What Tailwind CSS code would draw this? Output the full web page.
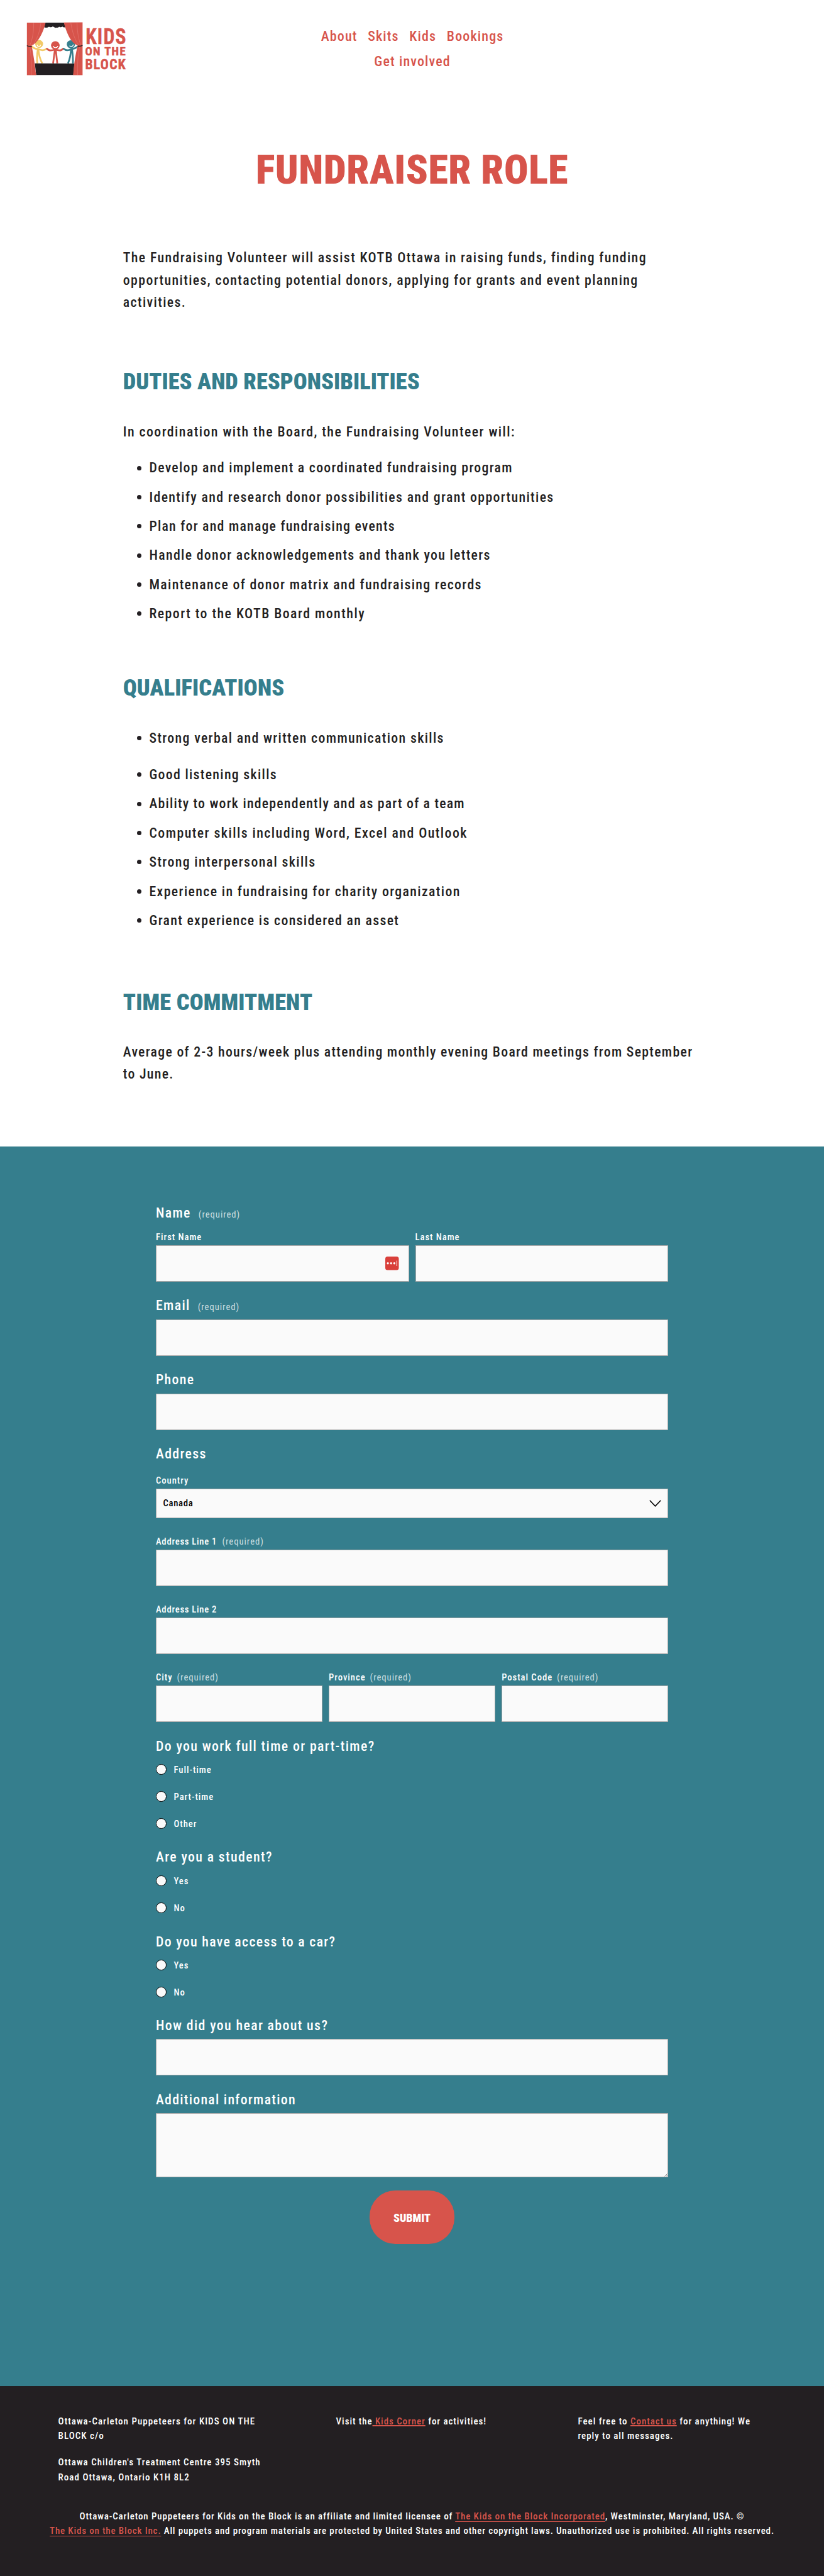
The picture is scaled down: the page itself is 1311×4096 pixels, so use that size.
<!DOCTYPE html>
<html lang="en">
<head>
<meta charset="utf-8">
<title>Fundraiser Role</title>
<script src="https://cdn.jsdelivr.net/npm/@tailwindcss/browser@4"></script>
</head>
<body class="bg-white font-['Roboto',sans-serif] font-medium [font-stretch:75%] text-[#231f22] overflow-x-hidden">

<header class="flex h-[231.3px] items-start">
  <a class="ml-[30.7px] mt-[25.6px] block w-[184.4px] shrink-0">
    <svg viewBox="0 0 1080 600" class="block w-[184.4px] h-[102.4px]" aria-label="Kids on the Block">
      <!-- puppets -->
      <g fill="none" stroke="#f2ca68" stroke-width="16" stroke-linecap="round" stroke-linejoin="round">
        <path d="M117 281C130 298 148 304 172 304C205 320 232 318 250 303"/>
        <path d="M170 310C164 350 160 395 166 438M176 310C180 355 188 395 212 438" stroke-linecap="butt"/>
      </g>
      <circle cx="183" cy="257" r="37" fill="#f2ca68"/>
      <path d="M164 267C170 286 190 288 196 268" fill="none" stroke="#fff" stroke-width="8" stroke-linecap="round"/>
      <g fill="none" stroke="#d7544b" stroke-width="16" stroke-linecap="round" stroke-linejoin="round">
        <path d="M256 301C272 322 298 322 333 308C366 322 392 320 406 301"/>
        <path d="M330 310L313 438M338 310L352 438" stroke-linecap="butt"/>
      </g>
      <circle cx="334" cy="271" r="40" fill="#d7544b"/>
      <path d="M315 279C322 297 348 297 356 279" fill="none" stroke="#fff" stroke-width="8" stroke-linecap="round"/>
      <g fill="none" stroke="#357e8d" stroke-width="16" stroke-linecap="round" stroke-linejoin="round">
        <path d="M412 302C432 320 458 320 484 304C510 302 528 298 542 281"/>
        <path d="M480 310C478 355 468 400 452 438M490 310C496 355 500 395 498 438" stroke-linecap="butt"/>
      </g>
      <circle cx="479" cy="260" r="38" fill="#357e8d"/>
      <path d="M469 276C480 289 498 282 501 265" fill="none" stroke="#fff" stroke-width="8" stroke-linecap="round"/>
      <!-- stage -->
      <path d="M240 59H416L428 100Q412 108 400 95Q385 108 370 96Q355 108 345 104Q335 112 310 94Q296 108 275 96Q252 110 231 102Z" fill="#231f22"/>
      <path d="M143 438L512 440L502 546H155Z" fill="#231f22"/>
      <!-- curtains -->
      <path d="M69 58H243C222 150 170 250 113 272C125 330 140 420 155 548H69Z" fill="#d7544b"/>
      <path d="M413 57L588 56V548H500C508 440 525 330 544 272C480 250 440 160 413 57Z" fill="#d7544b"/>
      <g fill="none" stroke="#ec8d88" stroke-width="2.5">
        <path d="M132 60C132 150 120 220 96 270M199 60C188 150 160 235 113 270M96 285C110 350 112 450 110 546"/>
        <path d="M478 58C492 150 520 230 555 270M536 58C538 150 552 220 572 268M560 285C540 380 540 460 542 546"/>
      </g>
      <path d="M69 269C85 276 100 278 114 276V285C98 287 82 282 69 277ZM588 267C572 274 556 275 542 273V283C560 284 574 280 588 275Z" fill="#231f22"/>
      <g fill="#d7544b" stroke="#d7544b" stroke-width="4" stroke-linejoin="round" font-family="Roboto, sans-serif" font-stretch="75%" letter-spacing="8">
        <text x="616" y="255" font-size="207" font-weight="600" textLength="384" lengthAdjust="spacingAndGlyphs">KIDS</text>
        <text x="612" y="363" font-size="108" font-weight="600" textLength="384" lengthAdjust="spacingAndGlyphs">ON THE</text>
        <text x="612" y="490" font-size="130" font-weight="600" textLength="384" lengthAdjust="spacingAndGlyphs">BLOCK</text>
      </g>
    </svg>
  </a>
  <nav class="ml-[225px] mt-[37.5px] flex w-[432px] flex-wrap justify-center gap-x-[16.6px] text-[22px] leading-[40px] tracking-[0.052em] text-[#d7544b]">
    <a>About</a><a>Skits</a><a>Kids</a><a>Bookings</a>
    <span class="w-full text-center"><a>Get involved</a></span>
  </nav>
</header>

<main>
  <h1 class="text-center text-[64px] leading-[80px] font-black tracking-[0.008em] text-[#d7544b]">FUNDRAISER ROLE</h1>

  <article class="ml-[195.8px] w-[920px] pb-[97.6px] text-[21.8px] leading-[35.5px] tracking-[0.062em]">
    <p class="mt-[81px] tracking-[0.0635em]">The Fundraising Volunteer will assist KOTB Ottawa in raising funds, finding funding<br>opportunities, contacting potential donors, applying for grants and event planning<br>activities.</p>

    <h2 class="mt-[84px] text-[36.4px] leading-[48px] font-black tracking-[0.001em] text-[#357e8d]">DUTIES AND RESPONSIBILITIES</h2>
    <p class="mt-[37.9px] tracking-[0.0665em]">In coordination with the Board, the Fundraising Volunteer will:</p>
    <ul class="mt-[22.1px] flex flex-col gap-[10.85px]">
      <li class="flex items-center tracking-[0.0594em]"><i class="ml-[22.7px] mr-[12px] size-[7px] rounded-full bg-[#231f22]"></i>Develop and implement a coordinated fundraising program</li>
      <li class="flex items-center"><i class="ml-[22.7px] mr-[12px] size-[7px] rounded-full bg-[#231f22]"></i>Identify and research donor possibilities and grant opportunities</li>
      <li class="flex items-center tracking-[0.057em]"><i class="ml-[22.7px] mr-[12px] size-[7px] rounded-full bg-[#231f22]"></i>Plan for and manage fundraising events</li>
      <li class="flex items-center tracking-[0.061em]"><i class="ml-[22.7px] mr-[12px] size-[7px] rounded-full bg-[#231f22]"></i>Handle donor acknowledgements and thank you letters</li>
      <li class="flex items-center"><i class="ml-[22.7px] mr-[12px] size-[7px] rounded-full bg-[#231f22]"></i>Maintenance of donor matrix and fundraising records</li>
      <li class="flex items-center tracking-[0.068em]"><i class="ml-[22.7px] mr-[12px] size-[7px] rounded-full bg-[#231f22]"></i>Report to the KOTB Board monthly</li>
    </ul>

    <h2 class="mt-[76.8px] text-[36.4px] leading-[48px] font-black tracking-[0.003em] text-[#357e8d]">QUALIFICATIONS</h2>
    <ul class="mt-[37.9px] flex flex-col gap-[10.95px]">
      <li class="mb-[11.2px] flex items-center"><i class="ml-[22.7px] mr-[12px] size-[7px] rounded-full bg-[#231f22]"></i>Strong verbal and written communication skills</li>
      <li class="flex items-center tracking-[0.06em]"><i class="ml-[22.7px] mr-[12px] size-[7px] rounded-full bg-[#231f22]"></i>Good listening skills</li>
      <li class="flex items-center tracking-[0.0555em]"><i class="ml-[22.7px] mr-[12px] size-[7px] rounded-full bg-[#231f22]"></i>Ability to work independently and as part of a team</li>
      <li class="flex items-center tracking-[0.067em]"><i class="ml-[22.7px] mr-[12px] size-[7px] rounded-full bg-[#231f22]"></i>Computer skills including Word, Excel and Outlook</li>
      <li class="flex items-center tracking-[0.063em]"><i class="ml-[22.7px] mr-[12px] size-[7px] rounded-full bg-[#231f22]"></i>Strong interpersonal skills</li>
      <li class="flex items-center tracking-[0.063em]"><i class="ml-[22.7px] mr-[12px] size-[7px] rounded-full bg-[#231f22]"></i>Experience in fundraising for charity organization</li>
      <li class="flex items-center tracking-[0.061em]"><i class="ml-[22.7px] mr-[12px] size-[7px] rounded-full bg-[#231f22]"></i>Grant experience is considered an asset</li>
    </ul>

    <h2 class="mt-[88.2px] text-[36.4px] leading-[48px] font-black tracking-[0.004em] text-[#357e8d]">TIME COMMITMENT</h2>
    <p class="mt-[37.2px] tracking-[0.0596em]">Average of 2-3 hours/week plus attending monthly evening Board meetings from September<br>to June.</p>
  </article>

  <section class="h-[1971px] bg-[#357e8d] pt-[90.1px] text-white">
    <form class="mx-auto flex w-[815px] flex-col text-[14.7px] leading-5 tracking-[0.065em]">
      <div class="flex h-[30px] items-baseline gap-[12px] leading-[30px]"><span class="text-[21.8px] tracking-[0.062em]">Name</span><span class="font-normal text-white/75">(required)</span></div>
      <div class="mt-[13.2px] grid grid-cols-2 gap-[10px]">
        <label class="block">First Name
          <span class="mt-[3.3px] flex h-[58px] items-center justify-end border border-[#a9a9a9] bg-[#fafafa] pr-[15px]">
            <svg viewBox="0 0 42 42" class="size-[21.5px]"><rect width="42" height="42" rx="7" fill="#d93f3a"/><circle cx="8" cy="21" r="3.2" fill="#fff"/><circle cx="18" cy="21" r="3.2" fill="#fff"/><circle cx="28" cy="21" r="3.2" fill="#fff"/><path d="M36 12.5V29.5" stroke="#fff" stroke-width="2"/></svg>
          </span>
        </label>
        <label class="block">Last Name<span class="mt-[3.3px] block h-[58px] border border-[#a9a9a9] bg-[#fafafa]"></span></label>
      </div>

      <div class="mt-[23.4px] flex h-[30px] items-baseline gap-[12px] leading-[30px]"><span class="text-[21.8px] tracking-[0.062em]">Email</span><span class="font-normal text-white/75">(required)</span></div>
      <span class="mt-[6.6px] block h-[58px] border border-[#a9a9a9] bg-[#fafafa]"></span>

      <div class="mt-[23.1px] h-[30px] text-[21.8px] leading-[30px] tracking-[0.062em]">Phone</div>
      <span class="mt-[6.6px] block h-[58px] border border-[#a9a9a9] bg-[#fafafa]"></span>

      <div class="mt-[23.5px] h-[30px] text-[21.8px] leading-[30px] tracking-[0.062em]">Address</div>
      <div class="mt-[17px]">Country</div>
      <div class="mt-[3px] flex h-[46.3px] items-center justify-between border border-[#a9a9a9] bg-[#fafafa] pl-[10.5px] pr-[10px] text-black tracking-[0.047em]">Canada
        <svg viewBox="0 0 19 11" class="h-[11px] w-[19px]" fill="none" stroke="#000" stroke-width="1.6"><path d="M0.8 0.8L9.5 9.8L18.2 0.8"/></svg>
      </div>
      <div class="mt-[27px] flex gap-[8.3px]"><span class="tracking-[0.05em]">Address Line 1</span><span class="font-normal text-white/75">(required)</span></div>
      <span class="mt-[3.2px] block h-[58px] border border-[#a9a9a9] bg-[#fafafa]"></span>
      <div class="mt-[27.2px] tracking-[0.05em]">Address Line 2</div>
      <span class="mt-[3.2px] block h-[58px] border border-[#a9a9a9] bg-[#fafafa]"></span>
      <div class="mt-[27px] grid grid-cols-3 gap-[10.2px]">
        <div><div class="flex gap-[7px]">City<span class="font-normal text-white/75">(required)</span></div><span class="mt-[3.2px] block h-[58px] border border-[#a9a9a9] bg-[#fafafa]"></span></div>
        <div><div class="flex gap-[7px]">Province<span class="font-normal text-white/75">(required)</span></div><span class="mt-[3.2px] block h-[58px] border border-[#a9a9a9] bg-[#fafafa]"></span></div>
        <div><div class="flex gap-[7px]">Postal Code<span class="font-normal text-white/75">(required)</span></div><span class="mt-[3.2px] block h-[58px] border border-[#a9a9a9] bg-[#fafafa]"></span></div>
      </div>

      <div class="mt-[23.5px] h-[30px] text-[21.8px] leading-[30px] tracking-[0.063em]">Do you work full time or part-time?</div>
      <div class="mt-[11.9px] flex flex-col gap-[23.1px]">
        <label class="flex h-5 items-center"><i class="mr-[11.5px] size-[17px] rounded-full border border-black bg-[#fafafa]"></i><span class="pt-px">Full-time</span></label>
        <label class="flex h-5 items-center"><i class="mr-[11.5px] size-[17px] rounded-full border border-black bg-[#fafafa]"></i><span class="pt-px">Part-time</span></label>
        <label class="flex h-5 items-center"><i class="mr-[11.5px] size-[17px] rounded-full border border-black bg-[#fafafa]"></i><span class="pt-px">Other</span></label>
      </div>

      <div class="mt-[28.4px] h-[30px] text-[21.8px] leading-[30px] tracking-[0.063em]">Are you a student?</div>
      <div class="mt-[12.2px] flex flex-col gap-[23.3px]">
        <label class="flex h-5 items-center"><i class="mr-[11.5px] size-[17px] rounded-full border border-black bg-[#fafafa]"></i><span class="pt-px">Yes</span></label>
        <label class="flex h-5 items-center"><i class="mr-[11.5px] size-[17px] rounded-full border border-black bg-[#fafafa]"></i><span class="pt-px">No</span></label>
      </div>

      <div class="mt-[29px] h-[30px] text-[21.8px] leading-[30px] tracking-[0.06em]">Do you have access to a car?</div>
      <div class="mt-[11.9px] flex flex-col gap-[23.1px]">
        <label class="flex h-5 items-center"><i class="mr-[11.5px] size-[17px] rounded-full border border-black bg-[#fafafa]"></i><span class="pt-px">Yes</span></label>
        <label class="flex h-5 items-center"><i class="mr-[11.5px] size-[17px] rounded-full border border-black bg-[#fafafa]"></i><span class="pt-px">No</span></label>
      </div>

      <div class="mt-[28.2px] h-[30px] text-[21.8px] leading-[30px] tracking-[0.063em]">How did you hear about us?</div>
      <span class="mt-[6.5px] block h-[58px] border border-[#a9a9a9] bg-[#fafafa]"></span>

      <div class="mt-[23.2px] h-[30px] text-[21.8px] leading-[30px] tracking-[0.059em]">Additional information</div>
      <div class="mt-[6.4px] flex h-[102.5px] items-end justify-end border border-[#a9a9a9] bg-[#fafafa]">
        <svg viewBox="0 0 6 6" class="size-[5px]" stroke="#555" stroke-width="0.8"><path d="M0.5 5.5L5.5 0.5M3.5 5.5L5.5 3.5"/></svg>
      </div>

      <button type="button" class="mx-auto mt-[20.6px] h-[85px] w-[134.4px] rounded-[41px] bg-[#d7544b] pt-[2px] text-[18px] font-black tracking-normal text-white">SUBMIT</button>
    </form>
  </section>
</main>

<footer class="h-[301.4px] bg-[#231f22] pt-[44.4px] text-[15px] leading-[23.4px] tracking-[0.0685em] text-white">
  <div class="ml-[92.6px] flex h-[151.1px]">
    <div class="flex w-[442px] flex-col gap-[18.8px]">
      <p>Ottawa-Carleton Puppeteers for KIDS ON THE<br>BLOCK c/o</p>
      <p>Ottawa Children's Treatment Centre 395 Smyth<br>Road Ottawa, Ontario K1H 8L2</p>
    </div>
    <p class="w-[384.9px] tracking-[0.062em]">Visit the<a class="text-[#d7544b] underline decoration-[1.5px] underline-offset-[1px] [text-decoration-skip-ink:none] whitespace-pre"> Kids Corner</a> for activities!</p>
    <p class="tracking-[0.065em]">Feel free to <a class="text-[#d7544b] underline decoration-[1.5px] underline-offset-[1px] [text-decoration-skip-ink:none]">Contact us</a> for anything! We<br>reply to all messages.</p>
  </div>
  <p class="text-center tracking-[0.0585em]">Ottawa-Carleton Puppeteers for Kids on the Block is an affiliate and limited licensee of <a class="text-[#d7544b] underline decoration-1 underline-offset-[3px]">The Kids on the Block Incorporated</a>, Westminster, Maryland, USA. ©<br><span class="tracking-[0.0567em]"><a class="text-[#d7544b] underline decoration-1 underline-offset-[3px]">The Kids on the Block Inc.</a> All puppets and program materials are protected by United States and other copyright laws. Unauthorized use is prohibited. All rights reserved.</span></p>
</footer>
</body>
</html>
